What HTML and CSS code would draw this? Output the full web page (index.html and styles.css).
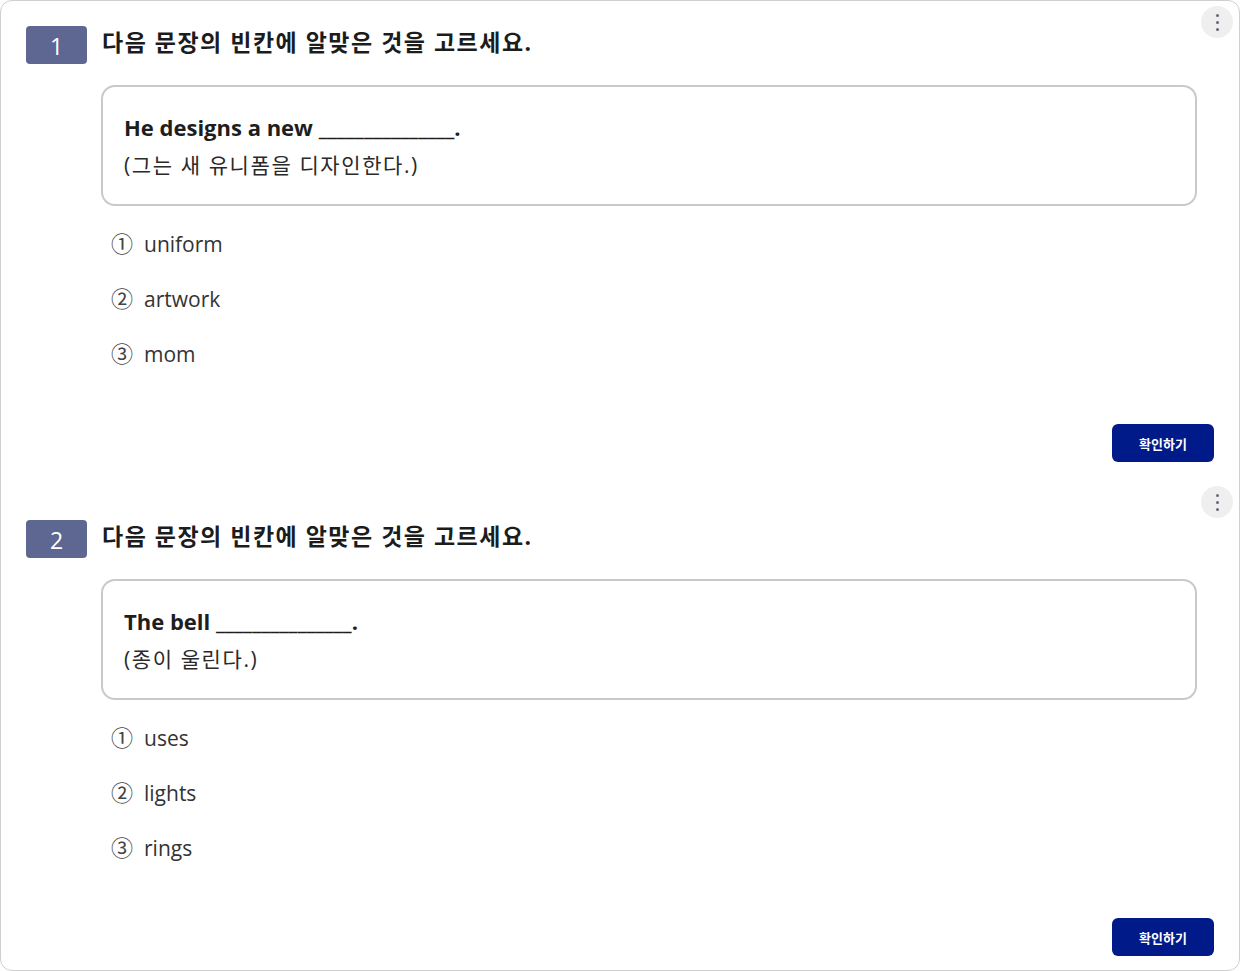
FILE: index.html
```html
<!DOCTYPE html>
<html lang="ko">

<head>
    <meta charset="UTF-8">
    <title>문제 풀기</title>
    <link rel="stylesheet" href="styles.css">
</head>

<body>
    <div class="page">
        <div class="question">
            <button class="more" type="button" aria-label="더보기">
                <span></span><span></span><span></span>
            </button>
            <div class="head">
                <span class="num">1</span>
                <h2 class="title">다음 문장의 빈칸에 알맞은 것을 고르세요.</h2>
            </div>
            <div class="sentence">
                <p class="en">He designs a new _______________.</p>
                <p class="ko">(그는 새 유니폼을 디자인한다.)</p>
            </div>
            <ul class="choices">
                <li><span class="mark">①</span>uniform</li>
                <li><span class="mark">②</span>artwork</li>
                <li><span class="mark">③</span>mom</li>
            </ul>
            <div class="actions">
                <button class="check" type="button">확인하기</button>
            </div>
        </div>

        <div class="question">
            <button class="more" type="button" aria-label="더보기">
                <span></span><span></span><span></span>
            </button>
            <div class="head">
                <span class="num">2</span>
                <h2 class="title">다음 문장의 빈칸에 알맞은 것을 고르세요.</h2>
            </div>
            <div class="sentence">
                <p class="en">The bell _______________.</p>
                <p class="ko">(종이 울린다.)</p>
            </div>
            <ul class="choices">
                <li><span class="mark">①</span>uses</li>
                <li><span class="mark">②</span>lights</li>
                <li><span class="mark">③</span>rings</li>
            </ul>
            <div class="actions">
                <button class="check" type="button">확인하기</button>
            </div>
        </div>
    </div>
</body>

</html>
```

FILE: styles.css
```css
html,
body {
    margin: 0;
    padding: 0;
}

body {
    font-family: "Open Sans", "Noto Sans CJK KR", sans-serif;
    color: #222;
    background: #fff;
}

.page {
    box-sizing: border-box;
    height: 971px;
    border: 1px solid #cfcfcf;
    border-radius: 12px;
    overflow: hidden;
}

.question {
    position: relative;
    padding: 25px 25px 19px 25px;
}

.question + .question {
    padding-top: 39px;
}

/* kebab menu */
.more {
    position: absolute;
    top: 5px;
    right: 6px;
    width: 32px;
    height: 32px;
    border: 0;
    border-radius: 50%;
    background: #efefef;
    padding: 0;
    display: flex;
    flex-direction: column;
    align-items: center;
    justify-content: center;
    gap: 4px;
}

.more span {
    width: 3px;
    height: 3px;
    border-radius: 50%;
    background: #666a75;
}

.head {
    display: flex;
    align-items: center;
    gap: 15px;
}

.num {
    width: 61px;
    height: 38px;
    line-height: 40px;
    text-align: center;
    background-color: #5d6791;
    color: #fff;
    font-size: 23px;
    border-radius: 4px;
}

.title {
    margin: 0 0 6px;
    font-size: 23px;
    line-height: 32px;
    font-weight: bold;
    color: #1c1c1c;
    letter-spacing: 1.5px;
}

.sentence {
    margin: 21px 17px 0 75px;
    border: 2px solid #c9c9c9;
    border-radius: 14px;
    padding: 21px 21px 20px;
}

.sentence p {
    margin: 0;
    height: 38px;
    line-height: 38px;
}

.sentence .en {
    font-size: 22px;
    font-weight: bold;
    color: #1e1e1e;
}

.sentence .ko {
    font-size: 21px;
    letter-spacing: 1.6px;
    color: #2a2a2a;
}

.choices {
    list-style: none;
    margin: 10px 0 0 85px;
    padding: 0;
}

.choices li {
    height: 55px;
    line-height: 55px;
    font-size: 21px;
    color: #333;
}

.choices .mark {
    display: inline-block;
    width: 33px;
    font-size: 22px;
    color: #444;
}

.actions {
    display: flex;
    justify-content: flex-end;
    margin-top: 43px;
}

.check {
    width: 102px;
    height: 38px;
    border: 0;
    border-radius: 6px;
    background-color: #011a8a;
    color: #fff;
    font-family: "Noto Sans CJK KR", sans-serif;
    font-size: 13px;
    font-weight: bold;
}
```
